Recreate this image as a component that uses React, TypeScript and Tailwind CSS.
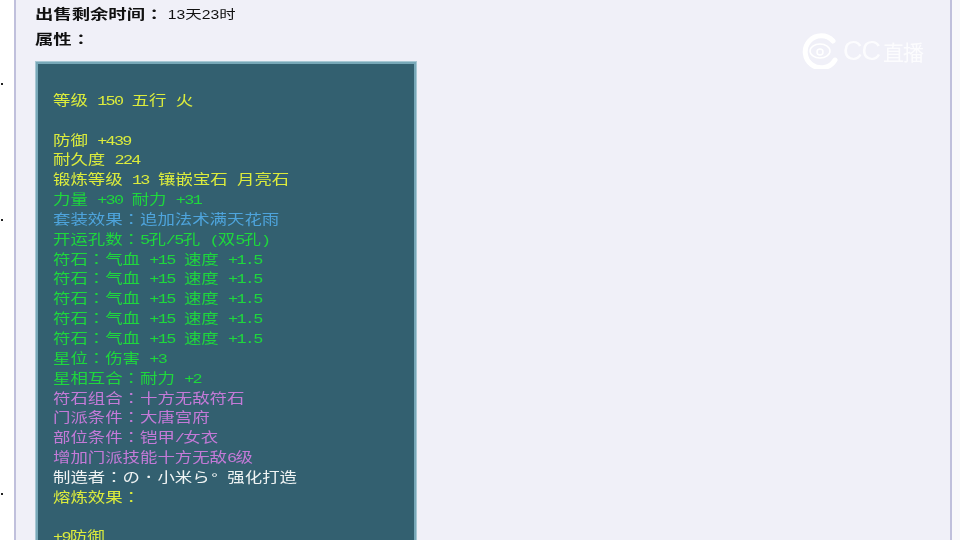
const cjkFont = "font-['Noto_Sans_CJK_SC','Noto_Sans_CJK_TC',sans-serif]"

const lines: { text: string; color: string }[] = [
  { text: "", color: "" },
  { text: "等级 150 五行 火", color: "text-[#dcec3c]" },
  { text: "", color: "" },
  { text: "防御 +439", color: "text-[#dcec3c]" },
  { text: "耐久度 224", color: "text-[#dcec3c]" },
  { text: "锻炼等级 13 镶嵌宝石 月亮石", color: "text-[#dcec3c]" },
  { text: "力量 +30 耐力 +31", color: "text-[#1ed83c]" },
  { text: "套装效果：追加法术满天花雨", color: "text-[#4ea4dc]" },
  { text: "开运孔数：5孔/5孔 (双5孔)", color: "text-[#1ed83c]" },
  { text: "符石：气血 +15 速度 +1.5", color: "text-[#1ed83c]" },
  { text: "符石：气血 +15 速度 +1.5", color: "text-[#1ed83c]" },
  { text: "符石：气血 +15 速度 +1.5", color: "text-[#1ed83c]" },
  { text: "符石：气血 +15 速度 +1.5", color: "text-[#1ed83c]" },
  { text: "符石：气血 +15 速度 +1.5", color: "text-[#1ed83c]" },
  { text: "星位：伤害 +3", color: "text-[#1ed83c]" },
  { text: "星相互合：耐力 +2", color: "text-[#1ed83c]" },
  { text: "符石组合：十方无敌符石", color: "text-[#c47ad8]" },
  { text: "门派条件：大唐宫府", color: "text-[#c47ad8]" },
  { text: "部位条件：铠甲/女衣", color: "text-[#c47ad8]" },
  { text: "增加门派技能十方无敌6级", color: "text-[#c47ad8]" },
  { text: "制造者：の．小米ら° 强化打造", color: "text-[#f0f4f4]" },
  { text: "熔炼效果：", color: "text-[#dcec3c]" },
  { text: "", color: "" },
  { text: "+9防御", color: "text-[#dcec3c]" },
]

// latin runs are half the width of a CJK cell, as in the bitmap font of the original
function Runs({ text }: { text: string }) {
  const parts = text.split(/([ -~°]+|[：．]+)/).filter(Boolean)
  return (
    <>
      {parts.map((p, i) =>
        /^[ -~°]+$/.test(p) ? (
          <span key={i} className="font-['Liberation_Mono',monospace] text-[13.5px] tracking-[-1.34px] [word-spacing:0.75px]">
            {p}
          </span>
        ) : /^[：．]+$/.test(p) ? (
          <span key={i} className="font-['Noto_Sans_CJK_TC',sans-serif]">
            {p}
          </span>
        ) : (
          <span key={i}>{p}</span>
        ),
      )}
    </>
  )
}

function Dot({ className }: { className: string }) {
  return <div className={`ml-px h-[2px] w-[2px] bg-[#222] ${className}`} />
}

export default function App() {
  return (
    <div className={`flex h-[540px] w-[960px] overflow-hidden bg-[#f8f8fb] ${cjkFont}`}>
      <div className="flex w-[14px] flex-col bg-white">
        <Dot className="mt-[83px]" />
        <Dot className="mt-[134px]" />
        <Dot className="mt-[272px]" />
      </div>
      <div className="relative w-[938px] border-x-2 border-[#c0c0dc] bg-[#f0f0f8]">
        <div className="ml-[19px] h-[62px] pt-[3px] text-[14px] text-[#111]">
          <div className="h-[21px] origin-left scale-x-[1.31] whitespace-pre leading-[21px]">
            <span className="font-bold">出售剩余时间</span>
            <span className="font-['Noto_Sans_CJK_TC',sans-serif] font-bold">：</span>
            <span className="font-['Liberation_Sans',sans-serif] text-[12px]"> 13</span>
            <span className="text-[12.5px]">天</span>
            <span className="font-['Liberation_Sans',sans-serif] text-[12px]">23</span>
            <span className="text-[12.5px]">时</span>
          </div>
          <div className="mt-[4px] h-[21px] origin-left scale-x-[1.31] leading-[21px] font-bold">
            属性<span className="font-['Noto_Sans_CJK_TC',sans-serif]">：</span>
          </div>
        </div>
        <div className="ml-[20px] h-[500px] w-[380px] border-2 border-[#78a8b8] bg-[#336070] pl-[15px] pt-[6px] outline outline-1 outline-[#a8c8d4]">
          {lines.map((l, i) => (
            <div
              key={i}
              className={`h-[19.85px] origin-left scale-x-[1.243] whitespace-pre text-[14px] leading-[19.85px] ${l.color}`}
            >
              <Runs text={l.text} />
            </div>
          ))}
        </div>
        <div className="absolute left-[786px] top-[33px] flex items-center gap-[3px] text-white/80 blur-[0.5px]">
          <svg width="38" height="36" viewBox="0 0 38 36" fill="none">
            <path d="M31 8A16 16 0 1 0 33 27" stroke="white" strokeWidth="5" strokeLinecap="round" />
            <ellipse cx="18" cy="18" rx="10" ry="7" stroke="white" strokeWidth="1.5" />
            <circle cx="18" cy="19" r="3" stroke="white" strokeWidth="1.5" />
          </svg>
          <span className="font-['Liberation_Sans',sans-serif] text-[27px] leading-none tracking-[-1px]">CC</span>
          <span className="text-[21px] leading-none tracking-[-1px]">直播</span>
        </div>
      </div>
      <div className="flex-1" />
    </div>
  )
}
